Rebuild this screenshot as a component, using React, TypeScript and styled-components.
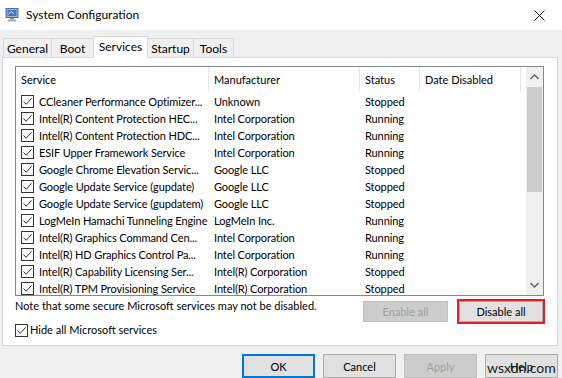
import React from "react";
import styled, { createGlobalStyle } from "styled-components";

const Global = createGlobalStyle`
  html, body { margin: 0; padding: 0; background: #f0f0f0; }
  body { font-family: "Lato", "Noto Sans", sans-serif; font-size: 11px; color: #000; }
`;

const Window = styled.div`
  position: relative;
  width: 562px;
  height: 378px;
  overflow: hidden;
  background: #f0f0f0;
  display: flex;
  flex-direction: column;
`;

const TitleBar = styled.div`
  height: 30px;
  flex: none;
  background: #fff;
  display: flex;
  align-items: center;
  padding-left: 5px;
  gap: 7px;
`;

const Title = styled.span`
  flex: 1;
  font-size: 12px;
  line-height: 16px;
`;

const CloseBtn = styled.div`
  width: 46px;
  height: 30px;
  display: flex;
  align-items: center;
  justify-content: center;
`;

const Body = styled.div`
  flex: 1;
  display: flex;
  flex-direction: column;
  padding: 6px 4px 0 2px;
`;

const TabRow = styled.div`
  display: flex;
  align-items: flex-end;
  height: 22px;
  padding-left: 2px;
  position: relative;
  z-index: 1;
  margin-bottom: -1px;
`;

const Tab = styled.div<{ $active?: boolean; $w: number }>`
  width: ${(p) => p.$w}px;
  box-sizing: border-box;
  height: ${(p) => (p.$active ? 22 : 20)}px;
  background: ${(p) => (p.$active ? "#fff" : "#f0f0f0")};
  border: 1px solid #d9d9d9;
  border-bottom: ${(p) => (p.$active ? "none" : "1px solid #d9d9d9")};
  margin-left: -1px;
  display: flex;
  align-items: ${(p) => (p.$active ? "flex-start" : "center")};
  padding-top: ${(p) => (p.$active ? 2 : 0)}px;
  justify-content: center;
  font-size: 12px;
  line-height: 15px;
`;

const Panel = styled.div`
  height: 289px;
  box-sizing: border-box;
  background: #fff;
  border: 1px solid #d9d9d9;
  padding: 8px 13px 0 12px;
  display: flex;
  flex-direction: column;
`;

const ListBox = styled.div`
  height: 230px;
  box-sizing: border-box;
  border: 1px solid #828790;
  display: flex;
  overflow: hidden;
  background: #fff;
`;

const ListMain = styled.div`
  flex: 1;
  display: flex;
  flex-direction: column;
  overflow: hidden;
`;

const cols = "193px 151px 60px 101px 1fr";

const Header = styled.div`
  display: grid;
  grid-template-columns: ${cols};
  height: 25px;
  flex: none;
  margin-bottom: 1px;
`;

const HeadCell = styled.div`
  border-right: 1px solid #e5e5e5;
  padding-left: 5px;
  display: flex;
  align-items: center;
  white-space: nowrap;
  &:last-child { border-right: none; }
`;

const Row = styled.div`
  display: grid;
  grid-template-columns: ${cols};
  height: 17px;
  flex: none;
  align-items: center;
`;

const Cell = styled.div`
  padding-left: 5px;
  white-space: nowrap;
  overflow: hidden;
  display: flex;
  align-items: center;
  gap: 5px;
  line-height: 17px;
  letter-spacing: -0.1px;
`;

const Box = styled.span`
  width: 13px;
  height: 13px;
  box-sizing: border-box;
  border: 1px solid #333;
  background: #fff;
  flex: none;
  display: inline-flex;
  align-items: center;
  justify-content: center;
`;

const ScrollBar = styled.div`
  width: 17px;
  flex: none;
  background: #f0f0f0;
  display: flex;
  flex-direction: column;
`;

const Arrow = styled.div`
  height: 20px;
  flex: none;
  display: flex;
  align-items: center;
  justify-content: center;
`;

const Thumb = styled.div`
  height: 105px;
  margin: 0 1px;
  background: #cdcdcd;
  flex: none;
`;

const Track = styled.div`
  flex: 1;
`;

const Bottom = styled.div`
  display: flex;
  margin-top: 2px;
`;

const LeftCol = styled.div`
  flex: 1;
  display: flex;
  flex-direction: column;
`;

const Note = styled.div`
  line-height: 16px;
  white-space: nowrap;
`;

const HideRow = styled.label`
  display: flex;
  align-items: center;
  gap: 2px;
  margin-top: 8px;
  line-height: 16px;
`;

const ActionButtons = styled.div`
  display: flex;
  gap: 11px;
  padding-top: 3px;
  padding-right: 1px;
`;

const Btn = styled.div<{ $disabled?: boolean; $w: number; $focus?: boolean; $mark?: boolean }>`
  width: ${(p) => p.$w}px;
  height: ${(p) => (p.$focus !== undefined ? 24 : 21)}px;
  box-sizing: border-box;
  display: flex;
  align-items: center;
  justify-content: center;
  background: ${(p) => (p.$disabled ? "#cccccc" : "#e1e1e1")};
  color: ${(p) => (p.$disabled ? "#a0a0a0" : "#000")};
  border: ${(p) => (p.$focus ? "2px solid #0078d7" : p.$disabled ? "1px solid #bfbfbf" : "1px solid #adadad")};
  outline: ${(p) => (p.$mark ? "2px solid #e0202a" : "none")};
  outline-offset: 0;
`;

const Footer = styled.div`
  display: flex;
  justify-content: flex-end;
  gap: 8px;
  padding: 8px 0 0 0;
`;

const Watermark = styled.div`
  position: absolute;
  left: 487px;
  top: 359px;
  font-family: "Lato", sans-serif;
  font-size: 14px;
  color: #1a1a1a;
`;

const Check = () => (
  <svg width="11" height="11" viewBox="0 0 11 11">
    <path d="M1.5 5.5 L4.2 8.3 L9.6 2.3" fill="none" stroke="#333" strokeWidth="1" />
  </svg>
);

const CheckBox = () => (
  <Box>
    <Check />
  </Box>
);

const SysIcon = () => (
  <svg width="14" height="14" viewBox="0 0 14 14">
    <rect x="1" y="0.5" width="12" height="9" fill="#9fb7d6" stroke="#4f6f9c" />
    <rect x="2.5" y="2" width="9" height="6" fill="#3a78c8" />
    <path d="M3.5 6.5 L6 3.5 L9 5.5" stroke="#dbe8f7" fill="none" strokeWidth="1" />
    <rect x="5" y="10" width="4" height="1.5" fill="#8a8a8a" />
    <rect x="3" y="11.5" width="8" height="2" fill="#a9a9a9" />
  </svg>
);

const rows: [string, string, string][] = [
  ["CCleaner Performance Optimizer...", "Unknown", "Stopped"],
  ["Intel(R) Content Protection HEC...", "Intel Corporation", "Running"],
  ["Intel(R) Content Protection HDC...", "Intel Corporation", "Running"],
  ["ESIF Upper Framework Service", "Intel Corporation", "Running"],
  ["Google Chrome Elevation Servic...", "Google LLC", "Stopped"],
  ["Google Update Service (gupdate)", "Google LLC", "Stopped"],
  ["Google Update Service (gupdatem)", "Google LLC", "Stopped"],
  ["LogMeIn Hamachi Tunneling Engine", "LogMeIn Inc.", "Running"],
  ["Intel(R) Graphics Command Cen...", "Intel Corporation", "Running"],
  ["Intel(R) HD Graphics Control Pa...", "Intel Corporation", "Running"],
  ["Intel(R) Capability Licensing Ser...", "Intel(R) Corporation", "Stopped"],
  ["Intel(R) TPM Provisioning Service", "Intel(R) Corporation", "Stopped"],
];

const tabs: [string, number][] = [
  ["General", 49],
  ["Boot", 43],
  ["Services", 55],
  ["Startup", 47],
  ["Tools", 41],
];

export default function App() {
  return (
    <Window>
      <Global />
      <TitleBar>
        <SysIcon />
        <Title>System Configuration</Title>
        <CloseBtn>
          <svg width="11" height="11" viewBox="0 0 11 11">
            <path d="M0.5 0.5 L10.5 10.5 M10.5 0.5 L0.5 10.5" stroke="#111" strokeWidth="1" />
          </svg>
        </CloseBtn>
      </TitleBar>
      <Body>
        <TabRow>
          {tabs.map(([t, w]) => (
            <Tab key={t} $w={w} $active={t === "Services"}>
              {t}
            </Tab>
          ))}
        </TabRow>
        <Panel>
          <ListBox>
            <ListMain>
              <Header>
                <HeadCell>Service</HeadCell>
                <HeadCell>Manufacturer</HeadCell>
                <HeadCell>Status</HeadCell>
                <HeadCell>Date Disabled</HeadCell>
                <HeadCell />
              </Header>
              {rows.map(([s, m, st]) => (
                <Row key={s}>
                  <Cell>
                    <CheckBox />
                    {s}
                  </Cell>
                  <Cell>{m}</Cell>
                  <Cell>{st}</Cell>
                  <Cell />
                  <Cell />
                </Row>
              ))}
            </ListMain>
            <ScrollBar>
              <Arrow>
                <svg width="9" height="6" viewBox="0 0 9 6">
                  <path d="M0.5 5 L4.5 1 L8.5 5" fill="none" stroke="#606060" strokeWidth="1.4" />
                </svg>
              </Arrow>
              <Thumb />
              <Track />
              <Arrow>
                <svg width="9" height="6" viewBox="0 0 9 6">
                  <path d="M0.5 1 L4.5 5 L8.5 1" fill="none" stroke="#606060" strokeWidth="1.4" />
                </svg>
              </Arrow>
            </ScrollBar>
          </ListBox>
          <Bottom>
            <LeftCol>
              <Note>Note that some secure Microsoft services may not be disabled.</Note>
              <HideRow>
                <CheckBox />
                Hide all Microsoft services
              </HideRow>
            </LeftCol>
            <ActionButtons>
              <Btn $w={85} $disabled>Enable all</Btn>
              <Btn $w={84} $mark>Disable all</Btn>
            </ActionButtons>
          </Bottom>
        </Panel>
        <Footer>
          <Btn $w={73} $focus>OK</Btn>
          <Btn $w={73} $focus={false}>Cancel</Btn>
          <Btn $w={73} $focus={false} $disabled>Apply</Btn>
          <Btn $w={73} $focus={false}>Help</Btn>
        </Footer>
      </Body>
      <Watermark>wsxdn.com</Watermark>
    </Window>
  );
}
